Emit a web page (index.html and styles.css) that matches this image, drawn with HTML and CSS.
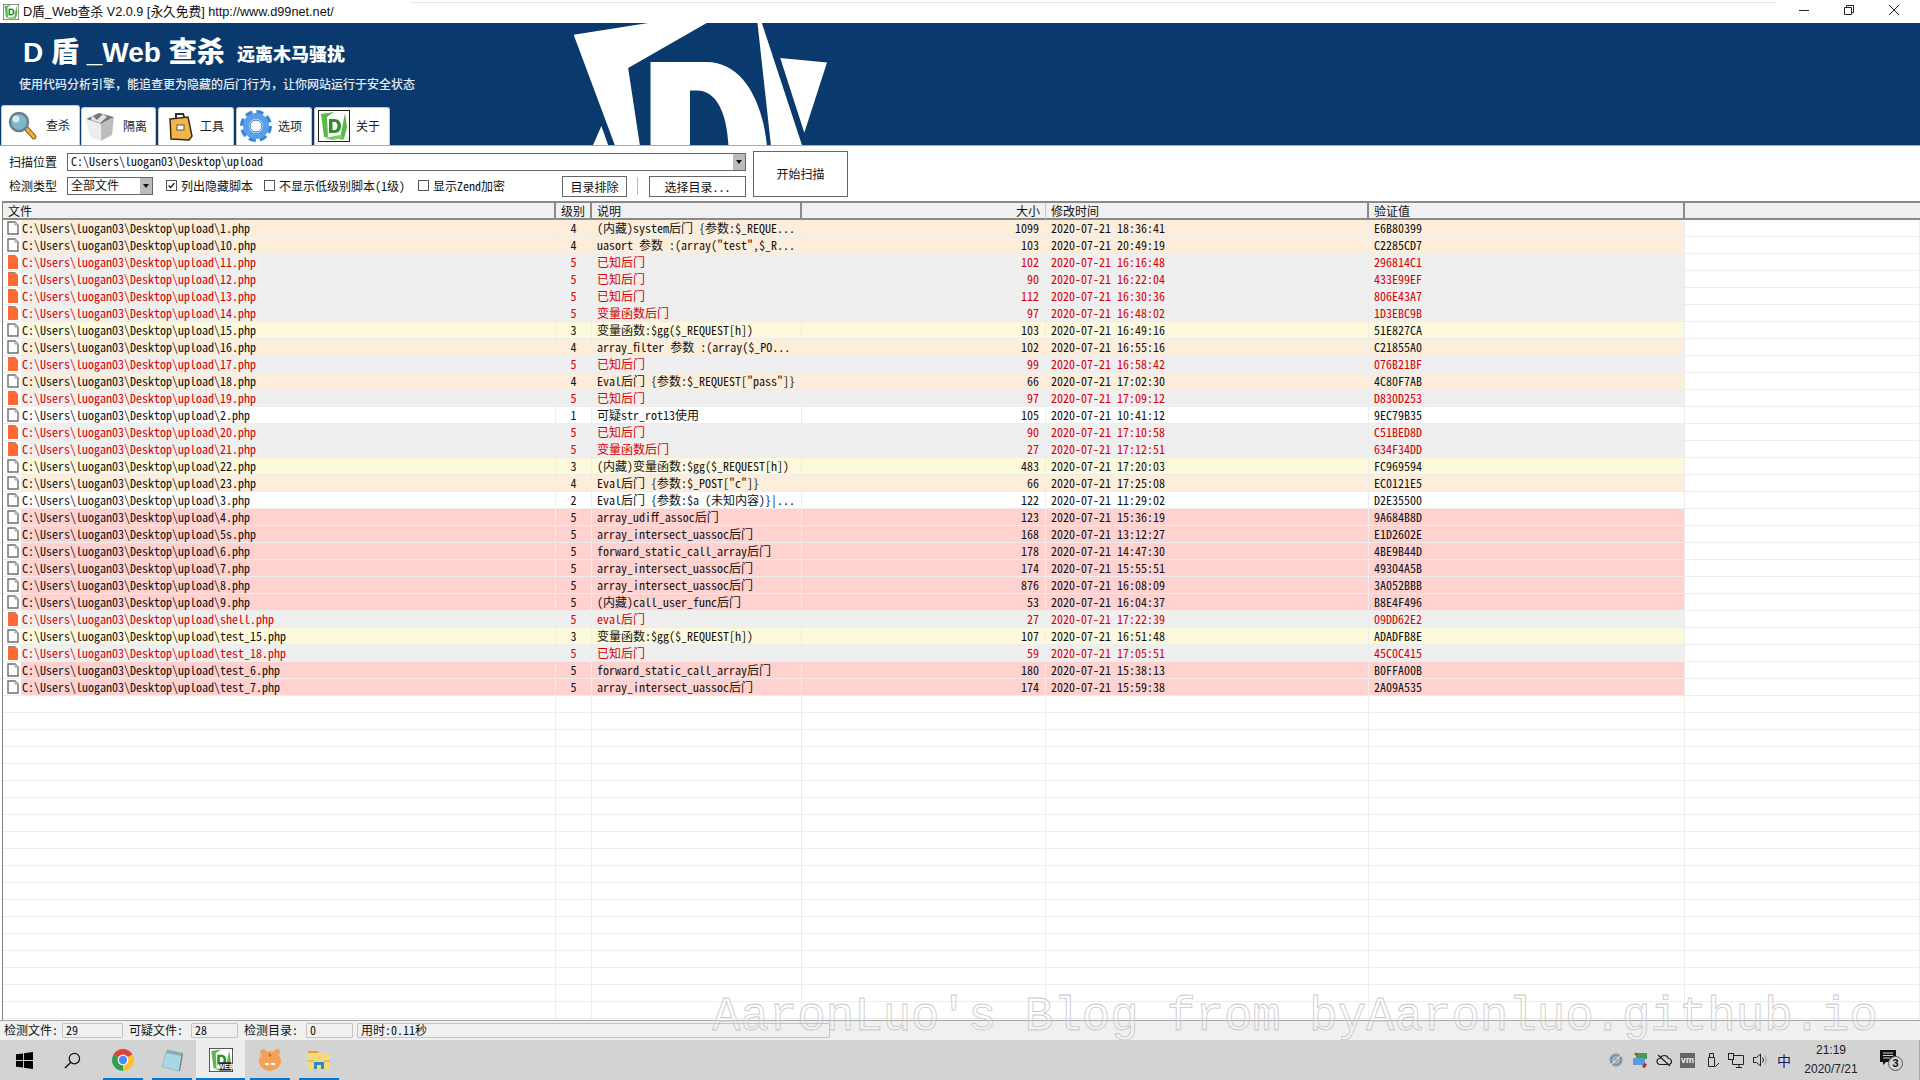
FILE: index.html
```html
<!DOCTYPE html>
<html lang="zh-CN">
<head>
  <meta charset="UTF-8" />
  <title>D盾_Web查杀</title>
  <link rel="stylesheet" href="styles.css">
</head>
<body>
  <svg class="defs" width="0" height="0">
    <symbol id="doc" viewBox="0 0 12 14">
      <path d="M1 1h7l3 3v9H1z" fill="#fff" stroke="#6e6e6e" stroke-width="1.4"/>
      <path d="M8 1v3h3" fill="#ddd" stroke="#9a9a9a"/>
    </symbol>
    <symbol id="doc-red" viewBox="0 0 12 14">
      <path d="M1 0h7l3 3v11H1z" fill="#ff6a33"/>
      <path d="M2 0h6v1H2z" fill="#888"/>
    </symbol>
    <symbol id="dlogo" viewBox="0 0 32 32">
      <rect x=".5" y=".5" width="31" height="31" fill="#fff" stroke="#222"/>
      <path d="M3 4l13-2-7 5 1 20H6z" fill="#5bb84a"/>
      <path d="M27 3l2 14-3 12-4 1 2-12z" fill="#5bb84a"/>
      <path d="M6 28l16-3 4 3-12 2z" fill="#7ccb6a"/>
      <path d="M11 9h5c5 0 7 3 7 7s-2 7-7 7h-5zm3.500 3v8h2c2 0 3-2 3-4s-1-4-3-4z" fill="#2f8f2a"/>
    </symbol>
  </svg>

  <div class="titlebar">
    <svg class="app-icon" viewBox="0 0 32 32"><use href="#dlogo"/></svg>
    <span class="title-text">D盾_Web查杀 V2.0.9 [永久免费] http://www.d99net.net/</span>
    <div class="win-btns">
      <svg class="win-btn" viewBox="0 0 45 20"><path d="M18 10.500h10" stroke="#222"/></svg>
      <svg class="win-btn" viewBox="0 0 45 20"><path d="M18.500 7.500h7v7h-7zM20.500 7.500v-2h7v7h-2" fill="none" stroke="#222"/></svg>
      <svg class="win-btn" viewBox="0 0 45 20"><path d="M18 5l10 10M28 5L18 15" stroke="#222"/></svg>
    </div>
  </div>

  <header class="banner">
    <div class="banner-left">
      <div class="brand">
        <span class="brand-main">D 盾 _Web 查杀</span>
        <span class="brand-sub">远离木马骚扰</span>
      </div>
      <div class="slogan">使用代码分析引擎，能追查更为隐藏的后门行为，让你网站运行于安全状态</div>
      <nav class="tabs">
        <div class="tab active">
          <svg class="tab-icon" viewBox="0 0 32 32">
            <path d="M18 19l8 9" stroke="#8a5a10" stroke-width="5" stroke-linecap="round"/>
            <path d="M18 19l8 9" stroke="#f2b23e" stroke-width="3" stroke-linecap="round"/>
            <circle cx="11" cy="13" r="9" fill="#7fb6cc" stroke="#6d7f88" stroke-width="2.500"/>
            <circle cx="8" cy="10" r="3.500" fill="#d5ecf4"/>
          </svg>
          <span>查杀</span>
        </div>
        <div class="tab">
          <svg class="tab-icon" viewBox="0 0 32 32">
            <path d="M1 9l13-6 15 4-13 7z" fill="#777"/>
            <path d="M1 9l15 5v17L5 27z" fill="#ededed"/>
            <path d="M16 14l13-7-2 18-11 6z" fill="#bdbdbd"/>
            <path d="M7 5l5 5 6-6 4 3-7 6-9-3z" fill="#e2e2e2"/>
          </svg>
          <span>隔离</span>
        </div>
        <div class="tab">
          <svg class="tab-icon" viewBox="0 0 32 32">
            <path d="M14 8V4h7l2 5" fill="none" stroke="#333" stroke-width="2"/>
            <path d="M8 9l18-2 4 19-3 4-18-1z" fill="#f0b64a" stroke="#3a2a10" stroke-width="1.500"/>
            <rect x="15" y="15" width="7" height="5" fill="#fff" stroke="#555"/>
          </svg>
          <span>工具</span>
        </div>
        <div class="tab">
          <svg class="tab-icon gear" viewBox="0 0 32 32">
            <circle cx="16" cy="16" r="13" fill="none" stroke="#3a86dc" stroke-width="6" stroke-dasharray="6.500 3.700"/>
            <circle cx="16" cy="16" r="10" fill="none" stroke="#5a9fe8" stroke-width="6"/>
            <circle cx="16" cy="16" r="6" fill="#fff" stroke="#2f6fb8"/>
          </svg>
          <span>选项</span>
        </div>
        <div class="tab">
          <svg class="tab-icon" viewBox="0 0 32 32"><use href="#dlogo"/></svg>
          <span>关于</span>
        </div>
      </nav>
    </div>
    <svg class="banner-logo" viewBox="220 70 765 365">
      <path d="M222 105L445 70H620L385 205L420 435H345z" fill="#fff"/>
      <path d="M305 378L325 435H280z" fill="#fff"/>
      <path d="M452 435V187H620C720 187 785 290 800 435H685C680 340 650 272 590 272H570V435z" fill="#fff"/>
      <path d="M772 70H785L905 435H812z" fill="#fff"/>
      <path d="M840 175L980 188L912 398z" fill="#fff"/>
    </svg>
  </header>

  <section class="toolbar">
    <div class="scan-form">
      <div class="form-row">
        <label class="field-label">扫描位置</label>
        <div class="combo path-combo">
          <span class="combo-text">C:\Users\luogan03\Desktop\upload</span>
          <span class="combo-arrow"></span>
        </div>
      </div>
      <div class="form-row">
        <label class="field-label">检测类型</label>
        <div class="combo type-combo">
          <span class="combo-text">全部文件</span>
          <span class="combo-arrow"></span>
        </div>
        <div class="check check-hidden">
          <span class="box"><svg viewBox="0 0 11 11"><path d="M2 5.500l2.500 2.500L9 2.500" fill="none" stroke="#111" stroke-width="1.600"/></svg></span>列出隐藏脚本
        </div>
        <div class="check check-low"><span class="box"></span>不显示低级别脚本(1级)</div>
        <div class="check check-zend"><span class="box"></span>显示Zend加密</div>
        <button class="btn btn-exclude">目录排除</button>
        <span class="btn-sep"></span>
        <button class="btn btn-choose">选择目录...</button>
      </div>
    </div>
    <button class="btn btn-start">开始扫描</button>
  </section>

  <main class="list">
    <table class="results">
      <colgroup>
        <col class="c-icon"><col class="c-file"><col class="c-level"><col class="c-desc"><col class="c-size"><col class="c-time"><col class="c-hash"><col>
      </colgroup>
      <thead>
        <tr>
          <th colspan="2" class="th-file">文件</th>
          <th class="th-level">级别</th>
          <th>说明</th>
          <th class="num th-size">大小</th>
          <th class="th-time">修改时间</th>
          <th>验证值</th>
          <th class="th-rest"></th>
        </tr>
      </thead>
      <tbody>
        <tr class="warn"><td class="ic"><svg class="doc"><use href="#doc"/></svg></td><td>C:\Users\luogan03\Desktop\upload\1.php</td><td class="lv">4</td><td>(内藏)system后门 {参数:$_REQUE...</td><td class="num">1099</td><td>2020-07-21 18:36:41</td><td>E6B80399</td><td class="rest"></td></tr>
        <tr class="warn"><td class="ic"><svg class="doc"><use href="#doc"/></svg></td><td>C:\Users\luogan03\Desktop\upload\10.php</td><td class="lv">4</td><td>uasort 参数 :(array("test",$_R...</td><td class="num">103</td><td>2020-07-21 20:49:19</td><td>C2285CD7</td><td class="rest"></td></tr>
        <tr class="known"><td class="ic"><svg class="doc"><use href="#doc-red"/></svg></td><td>C:\Users\luogan03\Desktop\upload\11.php</td><td class="lv">5</td><td>已知后门</td><td class="num">102</td><td>2020-07-21 16:16:48</td><td>296814C1</td><td class="rest"></td></tr>
        <tr class="known"><td class="ic"><svg class="doc"><use href="#doc-red"/></svg></td><td>C:\Users\luogan03\Desktop\upload\12.php</td><td class="lv">5</td><td>已知后门</td><td class="num">90</td><td>2020-07-21 16:22:04</td><td>433E99EF</td><td class="rest"></td></tr>
        <tr class="known"><td class="ic"><svg class="doc"><use href="#doc-red"/></svg></td><td>C:\Users\luogan03\Desktop\upload\13.php</td><td class="lv">5</td><td>已知后门</td><td class="num">112</td><td>2020-07-21 16:30:36</td><td>806E43A7</td><td class="rest"></td></tr>
        <tr class="known"><td class="ic"><svg class="doc"><use href="#doc-red"/></svg></td><td>C:\Users\luogan03\Desktop\upload\14.php</td><td class="lv">5</td><td>变量函数后门</td><td class="num">97</td><td>2020-07-21 16:48:02</td><td>1D3EBC9B</td><td class="rest"></td></tr>
        <tr class="mild"><td class="ic"><svg class="doc"><use href="#doc"/></svg></td><td>C:\Users\luogan03\Desktop\upload\15.php</td><td class="lv">3</td><td>变量函数:$gg($_REQUEST[h])</td><td class="num">103</td><td>2020-07-21 16:49:16</td><td>51E827CA</td><td class="rest"></td></tr>
        <tr class="warn"><td class="ic"><svg class="doc"><use href="#doc"/></svg></td><td>C:\Users\luogan03\Desktop\upload\16.php</td><td class="lv">4</td><td>array_filter 参数 :(array($_PO...</td><td class="num">102</td><td>2020-07-21 16:55:16</td><td>C21855A0</td><td class="rest"></td></tr>
        <tr class="known"><td class="ic"><svg class="doc"><use href="#doc-red"/></svg></td><td>C:\Users\luogan03\Desktop\upload\17.php</td><td class="lv">5</td><td>已知后门</td><td class="num">99</td><td>2020-07-21 16:58:42</td><td>076B21BF</td><td class="rest"></td></tr>
        <tr class="warn"><td class="ic"><svg class="doc"><use href="#doc"/></svg></td><td>C:\Users\luogan03\Desktop\upload\18.php</td><td class="lv">4</td><td>Eval后门 {参数:$_REQUEST["pass"]}</td><td class="num">66</td><td>2020-07-21 17:02:30</td><td>4C80F7AB</td><td class="rest"></td></tr>
        <tr class="known"><td class="ic"><svg class="doc"><use href="#doc-red"/></svg></td><td>C:\Users\luogan03\Desktop\upload\19.php</td><td class="lv">5</td><td>已知后门</td><td class="num">97</td><td>2020-07-21 17:09:12</td><td>D830D253</td><td class="rest"></td></tr>
        <tr><td class="ic"><svg class="doc"><use href="#doc"/></svg></td><td>C:\Users\luogan03\Desktop\upload\2.php</td><td class="lv">1</td><td>可疑str_rot13使用</td><td class="num">105</td><td>2020-07-21 10:41:12</td><td>9EC79B35</td><td class="rest"></td></tr>
        <tr class="known"><td class="ic"><svg class="doc"><use href="#doc-red"/></svg></td><td>C:\Users\luogan03\Desktop\upload\20.php</td><td class="lv">5</td><td>已知后门</td><td class="num">90</td><td>2020-07-21 17:10:58</td><td>C51BED8D</td><td class="rest"></td></tr>
        <tr class="known"><td class="ic"><svg class="doc"><use href="#doc-red"/></svg></td><td>C:\Users\luogan03\Desktop\upload\21.php</td><td class="lv">5</td><td>变量函数后门</td><td class="num">27</td><td>2020-07-21 17:12:51</td><td>634F34DD</td><td class="rest"></td></tr>
        <tr class="mild"><td class="ic"><svg class="doc"><use href="#doc"/></svg></td><td>C:\Users\luogan03\Desktop\upload\22.php</td><td class="lv">3</td><td>(内藏)变量函数:$gg($_REQUEST[h])</td><td class="num">483</td><td>2020-07-21 17:20:03</td><td>FC969594</td><td class="rest"></td></tr>
        <tr class="warn"><td class="ic"><svg class="doc"><use href="#doc"/></svg></td><td>C:\Users\luogan03\Desktop\upload\23.php</td><td class="lv">4</td><td>Eval后门 {参数:$_POST["c"]}</td><td class="num">66</td><td>2020-07-21 17:25:08</td><td>EC0121E5</td><td class="rest"></td></tr>
        <tr><td class="ic"><svg class="doc"><use href="#doc"/></svg></td><td>C:\Users\luogan03\Desktop\upload\3.php</td><td class="lv">2</td><td>Eval后门 {参数:$a (未知内容)}|...</td><td class="num">122</td><td>2020-07-21 11:29:02</td><td>D2E35500</td><td class="rest"></td></tr>
        <tr class="high"><td class="ic"><svg class="doc"><use href="#doc"/></svg></td><td>C:\Users\luogan03\Desktop\upload\4.php</td><td class="lv">5</td><td>array_udiff_assoc后门</td><td class="num">123</td><td>2020-07-21 15:36:19</td><td>9A684B8D</td><td class="rest"></td></tr>
        <tr class="high"><td class="ic"><svg class="doc"><use href="#doc"/></svg></td><td>C:\Users\luogan03\Desktop\upload\5s.php</td><td class="lv">5</td><td>array_intersect_uassoc后门</td><td class="num">168</td><td>2020-07-21 13:12:27</td><td>E1D2602E</td><td class="rest"></td></tr>
        <tr class="high"><td class="ic"><svg class="doc"><use href="#doc"/></svg></td><td>C:\Users\luogan03\Desktop\upload\6.php</td><td class="lv">5</td><td>forward_static_call_array后门</td><td class="num">178</td><td>2020-07-21 14:47:30</td><td>4BE9B44D</td><td class="rest"></td></tr>
        <tr class="high"><td class="ic"><svg class="doc"><use href="#doc"/></svg></td><td>C:\Users\luogan03\Desktop\upload\7.php</td><td class="lv">5</td><td>array_intersect_uassoc后门</td><td class="num">174</td><td>2020-07-21 15:55:51</td><td>49304A5B</td><td class="rest"></td></tr>
        <tr class="high"><td class="ic"><svg class="doc"><use href="#doc"/></svg></td><td>C:\Users\luogan03\Desktop\upload\8.php</td><td class="lv">5</td><td>array_intersect_uassoc后门</td><td class="num">876</td><td>2020-07-21 16:08:09</td><td>3A052BBB</td><td class="rest"></td></tr>
        <tr class="high"><td class="ic"><svg class="doc"><use href="#doc"/></svg></td><td>C:\Users\luogan03\Desktop\upload\9.php</td><td class="lv">5</td><td>(内藏)call_user_func后门</td><td class="num">53</td><td>2020-07-21 16:04:37</td><td>B8E4F496</td><td class="rest"></td></tr>
        <tr class="known"><td class="ic"><svg class="doc"><use href="#doc-red"/></svg></td><td>C:\Users\luogan03\Desktop\upload\shell.php</td><td class="lv">5</td><td>eval后门</td><td class="num">27</td><td>2020-07-21 17:22:39</td><td>09DD62E2</td><td class="rest"></td></tr>
        <tr class="mild"><td class="ic"><svg class="doc"><use href="#doc"/></svg></td><td>C:\Users\luogan03\Desktop\upload\test_15.php</td><td class="lv">3</td><td>变量函数:$gg($_REQUEST[h])</td><td class="num">107</td><td>2020-07-21 16:51:48</td><td>ADADFB8E</td><td class="rest"></td></tr>
        <tr class="known"><td class="ic"><svg class="doc"><use href="#doc-red"/></svg></td><td>C:\Users\luogan03\Desktop\upload\test_18.php</td><td class="lv">5</td><td>已知后门</td><td class="num">59</td><td>2020-07-21 17:05:51</td><td>45C0C415</td><td class="rest"></td></tr>
        <tr class="high"><td class="ic"><svg class="doc"><use href="#doc"/></svg></td><td>C:\Users\luogan03\Desktop\upload\test_6.php</td><td class="lv">5</td><td>forward_static_call_array后门</td><td class="num">180</td><td>2020-07-21 15:38:13</td><td>B0FFA00B</td><td class="rest"></td></tr>
        <tr class="high"><td class="ic"><svg class="doc"><use href="#doc"/></svg></td><td>C:\Users\luogan03\Desktop\upload\test_7.php</td><td class="lv">5</td><td>array_intersect_uassoc后门</td><td class="num">174</td><td>2020-07-21 15:59:38</td><td>2A09A535</td><td class="rest"></td></tr>
        <tr><td colspan="2"></td><td></td><td></td><td></td><td></td><td></td><td class="rest"></td></tr>
        <tr><td colspan="2"></td><td></td><td></td><td></td><td></td><td></td><td class="rest"></td></tr>
        <tr><td colspan="2"></td><td></td><td></td><td></td><td></td><td></td><td class="rest"></td></tr>
        <tr><td colspan="2"></td><td></td><td></td><td></td><td></td><td></td><td class="rest"></td></tr>
        <tr><td colspan="2"></td><td></td><td></td><td></td><td></td><td></td><td class="rest"></td></tr>
        <tr><td colspan="2"></td><td></td><td></td><td></td><td></td><td></td><td class="rest"></td></tr>
        <tr><td colspan="2"></td><td></td><td></td><td></td><td></td><td></td><td class="rest"></td></tr>
        <tr><td colspan="2"></td><td></td><td></td><td></td><td></td><td></td><td class="rest"></td></tr>
        <tr><td colspan="2"></td><td></td><td></td><td></td><td></td><td></td><td class="rest"></td></tr>
        <tr><td colspan="2"></td><td></td><td></td><td></td><td></td><td></td><td class="rest"></td></tr>
        <tr><td colspan="2"></td><td></td><td></td><td></td><td></td><td></td><td class="rest"></td></tr>
        <tr><td colspan="2"></td><td></td><td></td><td></td><td></td><td></td><td class="rest"></td></tr>
        <tr><td colspan="2"></td><td></td><td></td><td></td><td></td><td></td><td class="rest"></td></tr>
        <tr><td colspan="2"></td><td></td><td></td><td></td><td></td><td></td><td class="rest"></td></tr>
        <tr><td colspan="2"></td><td></td><td></td><td></td><td></td><td></td><td class="rest"></td></tr>
        <tr><td colspan="2"></td><td></td><td></td><td></td><td></td><td></td><td class="rest"></td></tr>
        <tr><td colspan="2"></td><td></td><td></td><td></td><td></td><td></td><td class="rest"></td></tr>
        <tr><td colspan="2"></td><td></td><td></td><td></td><td></td><td></td><td class="rest"></td></tr>
        <tr><td colspan="2"></td><td></td><td></td><td></td><td></td><td></td><td class="rest"></td></tr>
      </tbody>
    </table>
  </main>

  <footer class="statusbar">
    <span class="stat-label">检测文件:</span><span class="stat-field f-files">29</span>
    <span class="stat-label">可疑文件:</span><span class="stat-field f-sus">28</span>
    <span class="stat-label">检测目录:</span><span class="stat-field f-dirs">0</span>
    <span class="stat-field f-time">用时:0.11秒</span>
  </footer>

  <div class="taskbar">
    <div class="task-btn plain">
      <svg class="task-icon" viewBox="0 0 18 18"><path d="M0 2.500l7.500-1v7H0zM8.500 1.300L18 0v8.500H8.500zM0 9.500h7.500v7l-7.500-1zM8.500 9.500H18V18l-9.500-1.300z" fill="#000"/></svg>
    </div>
    <div class="task-btn plain">
      <svg class="task-icon" viewBox="0 0 18 18"><circle cx="11" cy="7" r="5.500" fill="none" stroke="#111" stroke-width="1.300"/><path d="M7 11l-6 6" stroke="#111" stroke-width="1.500"/></svg>
    </div>
    <div class="task-btn open">
      <svg class="task-icon big" viewBox="0 0 24 24">
        <path d="M12 12L2.500 6.500A11 11 0 0 1 21.500 6.500z" fill="#db4437"/>
        <path d="M12 12L21.500 6.500A11 11 0 0 1 12 23z" fill="#fbc02d"/>
        <path d="M12 12L12 23A11 11 0 0 1 2.500 6.500z" fill="#2e9e4f"/>
        <circle cx="12" cy="12" r="5.400" fill="#fff"/><circle cx="12" cy="12" r="4.200" fill="#4c8bf5"/>
      </svg>
    </div>
    <div class="task-btn open">
      <svg class="task-icon big" viewBox="0 0 24 24">
        <path d="M7 2l15 3-3 18L2 19z" fill="#a8d8e8" stroke="#8aa" stroke-width=".6"/>
        <path d="M7 2l15 3-.6 3L6 5z" fill="#8fa8b0"/>
        <path d="M19 23l3-18 1 1-3 17z" fill="#777"/>
      </svg>
    </div>
    <div class="task-btn open active">
      <svg class="task-icon big" viewBox="0 0 32 32"><use href="#dlogo"/><path d="M14 19h16v11H14z" fill="#222"/></svg>
      <span class="web-tag">WEB</span>
    </div>
    <div class="task-btn open">
      <svg class="task-icon big" viewBox="0 0 24 24">
        <circle cx="5" cy="4" r="3" fill="#f4a259"/><circle cx="19" cy="4" r="3" fill="#f4a259"/>
        <ellipse cx="12" cy="13" rx="11" ry="10" fill="#f4a259"/>
        <rect x="7" y="15" width="4" height="2" fill="#fff"/><rect x="13" y="15" width="4" height="2" fill="#fff"/>
        <circle cx="12" cy="7" r="1.500" fill="#c9762f"/>
      </svg>
    </div>
    <div class="task-btn open">
      <svg class="task-icon big" viewBox="0 0 24 24">
        <path d="M1 3h9l2 2h-11z" fill="#e0a526"/>
        <path d="M1 5h22v16H1z" fill="#f9d977"/>
        <path d="M7 21v-7h10v7h-3v-4h-4v4z" fill="#2a87d8"/>
        <path d="M1 12h6v2H1zM17 12h6v2h-6z" fill="#2a87d8" opacity=".25"/>
      </svg>
    </div>
    <div class="tray">
      <svg class="tray-icon" viewBox="0 0 16 16"><circle cx="8" cy="8" r="6.500" fill="#7f97a8"/><path d="M3 13L13 3" stroke="#d2d2d2" stroke-width="1.500"/><circle cx="8" cy="8" r="3" fill="none" stroke="#d2d2d2"/></svg>
      <svg class="tray-icon" viewBox="0 0 16 16"><rect x="4" y="1" width="11" height="6" fill="#4a9a4a"/><rect x="1" y="6" width="12" height="7" fill="#5a9bd8"/><path d="M12 11l3 1-2 4-3-1z" fill="#a33"/><circle cx="4" cy="2" r="1.500" fill="#a52"/></svg>
      <svg class="tray-icon" viewBox="0 0 16 16"><path d="M4 12.500a3 3 0 0 1 0-6 4.500 4.500 0 0 1 8.500 0 3 3 0 0 1 0 6z" fill="none" stroke="#222" stroke-width="1.200"/><path d="M2 3l12 11" stroke="#222" stroke-width="1.200"/></svg>
      <span class="tray-vm">vm</span>
      <svg class="tray-icon" viewBox="0 0 16 16"><path d="M4.500 5.500h6v9h-6zM5.500 5.500v-4h4v4" fill="none" stroke="#222"/><path d="M10 13l1.500 1.500L15 11" fill="none" stroke="#222"/></svg>
      <svg class="tray-icon" viewBox="0 0 16 16"><path d="M4.500 3.500h11v9h-11zM8 15.500h6M11 12.500v3" fill="none" stroke="#222"/><rect x=".5" y="1.500" width="5" height="6" fill="#d2d2d2" stroke="#222"/></svg>
      <svg class="tray-icon" viewBox="0 0 16 16"><path d="M1.500 5.500h3l4-3.500v12l-4-3.500h-3z" fill="none" stroke="#222"/><path d="M10.500 5.500a4 4 0 0 1 0 5" fill="none" stroke="#222"/><path d="M12.500 3.500a7 7 0 0 1 0 9" fill="none" stroke="#999"/></svg>
      <span class="tray-ime">中</span>
      <div class="clock"><span>21:19</span><span>2020/7/21</span></div>
      <div class="notify">
        <svg viewBox="0 0 16 16"><path d="M0 0h16v12H6l-3 3v-3H0z" fill="#111"/><path d="M3 3h10M3 5.500h10M3 8h7" stroke="#d2d2d2"/></svg>
        <span class="notify-badge">3</span>
      </div>
    </div>
  </div>

  <div class="watermark">AaronLuo's Blog from byAaronluo.github.io</div>
</body>
</html>
```

FILE: styles.css
```css
* {
  box-sizing: border-box;
}
html, body {
  margin: 0;
  height: 100%;
}
body {
  position: relative;
  width: 1920px;
  height: 1080px;
  overflow: hidden;
  display: flex;
  flex-direction: column;
  background: #fff;
  color: #111;
  font-family: "Noto Sans CJK SC", sans-serif;
  font-size: 12px;
  font-feature-settings: "hwid";
}
.defs {
  position: absolute;
}

/* window title */
.titlebar {
  position: relative;
  height: 23px;
  display: flex;
  align-items: center;
  padding-left: 3px;
  font-family: "Liberation Sans", "Noto Sans CJK SC", sans-serif;
  font-size: 12.700px;
  font-feature-settings: normal;
}
.titlebar::before {
  content: "";
  position: absolute;
  left: 410px;
  top: 2px;
  width: 1366px;
  height: 1px;
  background: #e6e6e6;
}
.app-icon {
  width: 16px;
  height: 16px;
  margin-right: 4px;
}
.title-text {
  padding-bottom: 2px;
}
.win-btns {
  margin-left: auto;
  padding-right: 4px;
  display: flex;
  align-self: flex-start;
}
.win-btn {
  width: 45px;
  height: 20px;
}

/* blue banner */
.banner {
  height: 122px;
  flex-shrink: 0;
  display: flex;
  background: #0a3a6d;
  overflow: hidden;
}
.banner-left {
  width: 573px;
  display: flex;
  flex-direction: column;
}
.brand {
  display: flex;
  align-items: center;
  height: 36px;
  margin: 9px 0 0 23px;
  color: #fff;
  font-family: "Liberation Sans", "Noto Sans CJK SC", sans-serif;
  font-weight: 900;
  font-feature-settings: normal;
}
.brand-main {
  font-size: 28px;
  width: 214px;
  white-space: nowrap;
}
.brand-sub {
  font-size: 18px;
  padding-top: 6px;
}
.slogan {
  margin: 8px 0 0 19px;
  color: #e4ebf3;
  font-size: 12px;
  line-height: 16px;
  font-weight: 500;
  font-feature-settings: normal;
}
.tabs {
  margin-top: auto;
  padding-left: 1px;
  display: flex;
  align-items: flex-end;
}
.tab {
  width: 76px;
  height: 38px;
  margin-right: 2px;
  padding: 0 0 2px 3px;
  display: flex;
  align-items: center;
  gap: 6px;
  background: #fff;
  border: 1px solid #c8c8c8;
  border-bottom: 0;
  border-radius: 3px 3px 0 0;
  color: #222;
}
.tab:nth-child(2) {
  width: 75px;
}
.tab.active {
  width: 79px;
  height: 40px;
  margin-right: 1px;
  padding-left: 6px;
}
.tab-icon {
  width: 32px;
  height: 32px;
  flex-shrink: 0;
}

/* scan form */
.toolbar {
  flex-shrink: 0;
  height: 56px;
  display: flex;
  align-items: flex-start;
  border-top: 1px solid #aaa;
}
.scan-form {
  width: 746px;
  padding: 7px 0 0 9px;
}
.form-row {
  height: 18px;
  display: flex;
  align-items: center;
  margin-bottom: 6px;
}
.field-label {
  width: 58px;
  font-size: 12px;
  padding-bottom: 2px;
}
.combo {
  height: 18px;
  display: flex;
  border: 1px solid #666;
  line-height: 14px;
}
.path-combo {
  width: 679px;
}
.type-combo {
  width: 86px;
}
.combo-text {
  flex: 1;
  padding-left: 3px;
}
.combo-arrow {
  width: 12px;
  background: #bbb;
  display: flex;
  align-items: center;
  justify-content: center;
}
.combo-arrow::after {
  content: "";
  border: 3px solid transparent;
  border-top: 4px solid #111;
  border-bottom: 0;
}
.check {
  display: flex;
  align-items: center;
  white-space: nowrap;
  padding-bottom: 2px;
}
.check-hidden {
  width: 98px;
  margin-left: 13px;
}
.check-low {
  width: 154px;
}
.check-zend {
  width: 144px;
}
.box {
  width: 11px;
  height: 11px;
  margin-right: 4px;
  border: 1px solid #555;
  background: #fff;
  display: flex;
}
.box svg {
  width: 9px;
  height: 9px;
}
.btn {
  background: #fff;
  border: 1px solid #666;
  color: #111;
  font: inherit;
  font-feature-settings: inherit;
  padding: 0;
}
.btn-exclude {
  width: 65px;
  height: 21px;
}
.btn-sep {
  width: 1px;
  height: 18px;
  margin: 0 11px 0 10px;
  background: #bbb;
}
.btn-choose {
  width: 97px;
  height: 21px;
}
.btn-start {
  width: 95px;
  height: 46px;
  margin: 5px 0 0 7px;
  padding-bottom: 2px;
}

/* result list */
.list {
  flex: 1;
  min-height: 0;
  overflow: hidden;
  margin-left: 2px;
  border-left: 1px solid #808080;
  border-top: 2px solid #8a8a8a;
}
.results {
  width: 1917px;
  table-layout: fixed;
  border-collapse: separate;
  border-spacing: 0;
}
.c-icon { width: 18px; }
.c-file { width: 535px; }
.c-level { width: 36px; }
.c-desc { width: 210px; }
.c-size { width: 244px; }
.c-time { width: 323px; }
.c-hash { width: 316px; }
th {
  height: 17px;
  padding: 0 0 0 5px;
  background: #f0f0f0;
  border-bottom: 2px solid #8a8a8a;
  border-right: 2px solid #8a8a8a;
  font-weight: 400;
  font-size: 12px;
  line-height: 14px;
  text-align: left;
  white-space: nowrap;
  overflow: hidden;
}
th.th-size {
  border-right: 1px solid #c8c8c8;
  padding-right: 5px;
}
th.th-rest {
  border-right: 0;
}
td {
  height: 17px;
  padding: 0 0 0 5px;
  border-bottom: 1px solid #ededed;
  border-right: 1px solid #ededed;
  font-size: 12px;
  line-height: 16px;
  white-space: nowrap;
  overflow: hidden;
}
td.ic {
  padding: 0 0 0 4px;
  background: #fff;
  border-right: 0;
  line-height: 0;
}
td.lv {
  padding: 0;
  text-align: center;
}
td.num {
  padding: 0 6px 0 0;
  text-align: right;
}
th.num {
  text-align: right;
}
.doc {
  width: 12px;
  height: 14px;
}
tr.warn td { background: #fdeedb; }
tr.mild td { background: #fdf9dc; }
tr.high td { background: #ffd1cf; }
tr.known td { background: #efefef; color: #d80000; }
tr td.ic, tr td.rest { background: #fff; }
td.ic + td { padding-left: 1px; }

/* status bar */
.statusbar {
  height: 20px;
  flex-shrink: 0;
  display: flex;
  align-items: center;
  padding-left: 4px;
  background: #f0f0f0;
  border-top: 1px solid #a8a8a8;
}
.stat-label {
  width: 58px;
  white-space: nowrap;
  padding-bottom: 2px;
}
.stat-field {
  height: 15px;
  padding-left: 3px;
  border: 1px solid #c4c4c4;
  border-radius: 1px;
  line-height: 12px;
}
.f-files { width: 61px; margin-right: 6px; }
.f-sus { width: 47px; margin: 0 6px 0 4px; }
.f-dirs { width: 47px; margin: 0 4px 0 4px; }
.f-time { width: 473px; }

/* taskbar */
.taskbar {
  height: 40px;
  flex-shrink: 0;
  display: flex;
  background: #d3d3d3;
  border-right: 1px solid #aaa;
}
.task-btn {
  position: relative;
  width: 49px;
  display: flex;
  align-items: center;
  justify-content: center;
}
.task-btn.plain {
  width: 48px;
}
.task-btn.plain + .open {
  margin-left: 2px;
}
.task-btn.open::after {
  content: "";
  position: absolute;
  left: 5px;
  right: 4px;
  bottom: 0;
  height: 2px;
  background: #0078d7;
}
.task-btn.active {
  background: #ededed;
}
.task-btn.active::after {
  left: 0;
  right: 0;
}
.task-icon {
  width: 17px;
  height: 17px;
}
.task-icon.big {
  width: 24px;
  height: 24px;
}
.web-tag {
  position: absolute;
  right: 11px;
  bottom: 9px;
  color: #fff;
  font-size: 7px;
  line-height: 8px;
  font-weight: 700;
  font-family: "Liberation Sans", sans-serif;
  font-feature-settings: normal;
}
.tray {
  margin-left: auto;
  display: flex;
  align-items: center;
}
.tray-icon {
  width: 16px;
  height: 16px;
  margin-right: 8px;
}
.tray-vm {
  width: 15px;
  height: 15px;
  margin-right: 9px;
  background: #666;
  color: #eee;
  font: 700 9px/15px "Liberation Sans", sans-serif;
  text-align: center;
}
.tray-ime {
  width: 16px;
  margin: 0 7px 0 0;
  color: #0b1a6a;
  font-size: 14px;
  text-align: center;
}
.clock {
  width: 60px;
  margin: 0 19px 0 2px;
  display: flex;
  flex-direction: column;
  align-items: center;
  font-family: "Liberation Sans", sans-serif;
  font-feature-settings: normal;
  font-size: 12px;
  line-height: 19px;
  color: #222;
}
.notify {
  position: relative;
  width: 30px;
  height: 24px;
  margin-right: 9px;
}
.notify svg {
  width: 16px;
  height: 16px;
  position: absolute;
  top: 2px;
  left: 0;
}
.notify-badge {
  position: absolute;
  left: 8px;
  top: 8px;
  width: 15px;
  height: 15px;
  border: 1px solid #555;
  border-radius: 50%;
  background: #d3d3d3;
  font: 700 11px/13px "Liberation Sans", sans-serif;
  text-align: center;
}

/* blog watermark, sits over the window */
.watermark {
  position: absolute;
  left: 712px;
  top: 992px;
  font-family: "Liberation Mono", monospace;
  font-size: 47.400px;
  line-height: 52px;
  white-space: nowrap;
  color: rgba(255,255,255,0.15);
  -webkit-text-stroke: 0.8px #c8c8c8;
  font-feature-settings: normal;
}
```
